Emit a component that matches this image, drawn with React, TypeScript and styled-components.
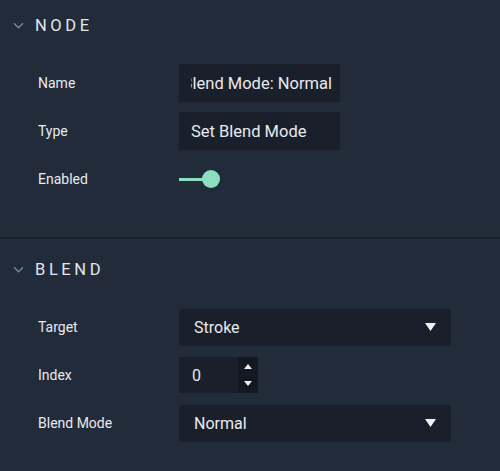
import React from 'react';
import styled, { createGlobalStyle } from 'styled-components';

const colors = {
    bg: '#222b3a',
    field: '#1a202b',
    spin: '#131821',
    divider: '#1a212d',
    text: '#e8eaee',
    heading: '#e2e6ed',
    chevron: '#7e8696',
    mint: '#8de0bf',
};

const GlobalStyle = createGlobalStyle`
    html, body {
        margin: 0;
        padding: 0;
        background: ${colors.bg};
    }

    body {
        font-family: Roboto, 'Liberation Sans', sans-serif;
        color: ${colors.text};
        -webkit-font-smoothing: antialiased;
    }
`;

const Panel = styled.div`
    width: 500px;
    height: 471px;
    overflow: hidden;
    background: ${colors.bg};
`;

const Section = styled.section<{ top: number; bottom: number }>`
    padding-top: ${(p) => p.top}px;
    padding-bottom: ${(p) => p.bottom}px;
`;

const Divider = styled.div`
    height: 2px;
    background: ${colors.divider};
`;

const Header = styled.div`
    display: flex;
    align-items: center;
    height: 50px;
    padding-left: 13px;
    gap: 11px;

    h2 {
        margin: 0;
        font-size: 16.5px;
        font-weight: 400;
        letter-spacing: 3.6px;
        color: ${colors.heading};
    }
`;

const Chevron = styled.svg`
    width: 11px;
    height: 7px;
    stroke: ${colors.chevron};
    stroke-width: 1.4;
    fill: none;
    margin-top: 1px;
`;

const Rows = styled.div`
    display: flex;
    flex-direction: column;
    gap: 10px;
    margin-top: 14px;
    padding: 0 49px 0 38px;
`;

const Row = styled.div`
    display: grid;
    grid-template-columns: 141px 1fr;
    align-items: center;
    height: 38px;
`;

const Label = styled.span`
    font-size: 14px;
`;

const TextField = styled.div<{ width: number }>`
    display: flex;
    align-items: center;
    width: ${(p) => p.width}px;
    height: 38px;
    box-sizing: border-box;
    padding: 0 8px 0 12px;
    background: ${colors.field};
    font-size: 16.5px;
`;

const Clip = styled.div<{ $end?: boolean }>`
    display: flex;
    justify-content: ${(p) => (p.$end ? 'flex-end' : 'flex-start')};
    flex: 1;
    min-width: 0;
    overflow: hidden;
    white-space: nowrap;

    span {
        flex: none;
    }
`;

const Select = styled.div`
    display: flex;
    align-items: center;
    justify-content: space-between;
    height: 37px;
    padding: 0 15px;
    background: ${colors.field};
    border-radius: 3px;
    font-size: 16px;
`;

const Caret = styled.svg`
    width: 11px;
    height: 8px;
    fill: #f2f2f2;
`;

const NumberField = styled.div`
    display: flex;
    width: 79px;
    height: 36px;
    background: ${colors.field};
    font-size: 16px;

    span {
        flex: 1;
        display: flex;
        align-items: center;
        padding-left: 13px;
    }
`;

const Spinner = styled.div`
    display: flex;
    flex-direction: column;
    justify-content: space-between;
    align-items: center;
    width: 20px;
    padding: 7px 0;
    box-sizing: border-box;
    background: ${colors.spin};

    svg {
        width: 8px;
        height: 5px;
        fill: #eeeeee;
    }
`;

const Toggle = styled.div`
    position: relative;
    width: 41px;
    height: 18px;

    &::before {
        content: '';
        position: absolute;
        left: 0;
        top: 8px;
        width: 30px;
        height: 3px;
        background: ${colors.mint};
    }

    &::after {
        content: '';
        position: absolute;
        right: 0;
        top: 0;
        width: 18px;
        height: 18px;
        border-radius: 50%;
        background: ${colors.mint};
    }
`;

const SectionHeader: React.FC<{ title: string }> = ({ title }) => (
    <Header>
        <Chevron viewBox="0 0 11 7">
            <path d="M1 1.2l4.5 4.5 4.5-4.5" />
        </Chevron>
        <h2>{title}</h2>
    </Header>
);

const Dropdown: React.FC<{ value: string }> = ({ value }) => (
    <Select>
        {value}
        <Caret viewBox="0 0 11 8">
            <path d="M0 0h11L5.5 8z" />
        </Caret>
    </Select>
);

export default function App() {
    return (
        <>
            <GlobalStyle />
            <Panel>
                <Section top={0} bottom={39}>
                    <SectionHeader title="NODE" />
                    <Rows>
                        <Row>
                            <Label>Name</Label>
                            <TextField width={161}>
                                <Clip $end>
                                    <span>Set Blend Mode: Normal</span>
                                </Clip>
                            </TextField>
                        </Row>
                        <Row>
                            <Label>Type</Label>
                            <TextField width={161}>
                                <Clip>
                                    <span>Set Blend Mode</span>
                                </Clip>
                            </TextField>
                        </Row>
                        <Row>
                            <Label>Enabled</Label>
                            <Toggle />
                        </Row>
                    </Rows>
                </Section>
                <Divider />
                <Section top={5} bottom={0}>
                    <SectionHeader title="BLEND" />
                    <Rows>
                        <Row>
                            <Label>Target</Label>
                            <Dropdown value="Stroke" />
                        </Row>
                        <Row>
                            <Label>Index</Label>
                            <NumberField>
                                <span>0</span>
                                <Spinner>
                                    <svg viewBox="0 0 8 5">
                                        <path d="M0 5L4 0l4 5z" />
                                    </svg>
                                    <svg viewBox="0 0 8 5">
                                        <path d="M0 0h8L4 5z" />
                                    </svg>
                                </Spinner>
                            </NumberField>
                        </Row>
                        <Row>
                            <Label>Blend Mode</Label>
                            <Dropdown value="Normal" />
                        </Row>
                    </Rows>
                </Section>
            </Panel>
        </>
    );
}
